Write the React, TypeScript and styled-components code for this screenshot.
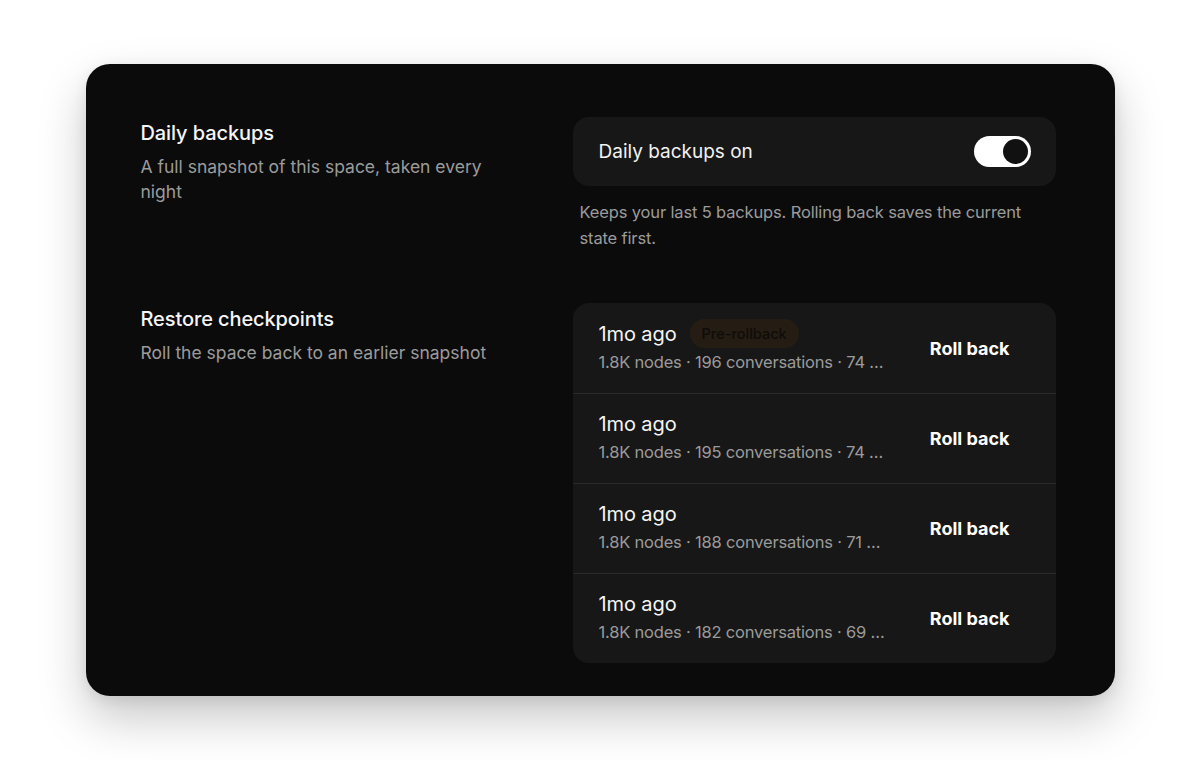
import React from "react";
import styled, { createGlobalStyle } from "styled-components";

const GlobalStyle = createGlobalStyle`
  html, body {
    margin: 0;
    padding: 0;
    background: #ffffff;
  }
  body {
    font-family: Inter, "Noto Sans", sans-serif;
    -webkit-font-smoothing: antialiased;
  }
`;

const Page = styled.div`
  width: 1200px;
  height: 760px;
  display: flex;
  justify-content: center;
  padding-top: 64px;
  box-sizing: border-box;
`;

const Card = styled.div`
  width: 1029px;
  height: 632px;
  box-sizing: border-box;
  background: #0b0b0b;
  border-radius: 24px;
  box-shadow: 0 22px 48px rgba(0, 0, 0, 0.22), 0 4px 14px rgba(0, 0, 0, 0.08);
  padding: 53px 59px 33px 55px;
  display: flex;
  flex-direction: column;
  gap: 52px;
`;

const Section = styled.section`
  display: grid;
  grid-template-columns: 360px 483px;
  column-gap: 72px;
  align-items: start;
`;

const Intro = styled.div`
  padding-top: 2px;
`;

const Title = styled.h2`
  margin: 0;
  font-size: 20px;
  line-height: 28px;
  font-weight: 500;
  color: #f5f5f5;
  letter-spacing: -0.1px;
`;

const Description = styled.p`
  margin: 7px 0 0;
  font-size: 17.5px;
  line-height: 25px;
  color: #9b9b9b;
`;

const Panel = styled.div`
  background: #171717;
  border-radius: 16px;
  overflow: hidden;
`;

const ToggleRow = styled.div`
  height: 69px;
  padding: 0 25px 0 26px;
  display: flex;
  align-items: center;
  justify-content: space-between;
`;

const ToggleLabel = styled.span`
  font-size: 19px;
  line-height: 26px;
  padding-top: 1px;
  color: #f2f2f2;
`;

const Switch = styled.button<{ $on: boolean }>`
  width: 57px;
  height: 31px;
  border: none;
  padding: 3px;
  border-radius: 999px;
  background: ${(p) => (p.$on ? "#ffffff" : "#3a3a3a")};
  display: flex;
  justify-content: ${(p) => (p.$on ? "flex-end" : "flex-start")};
  cursor: pointer;
`;

const Knob = styled.span`
  width: 25px;
  height: 25px;
  border-radius: 50%;
  background: #111111;
`;

const Hint = styled.p`
  margin: 13px 0 0;
  padding-left: 7px;
  font-size: 16.5px;
  line-height: 26px;
  letter-spacing: -0.15px;
  color: #9b9b9b;
`;

const CheckpointRow = styled.div`
  height: 90px;
  box-sizing: border-box;
  padding: 0 32px 0 26px;
  display: flex;
  align-items: center;
  gap: 24px;
  & + & {
    border-top: 1px solid #2a2a2a;
  }
`;

const RowText = styled.div`
  flex: 1;
  min-width: 0;
  display: flex;
  flex-direction: column;
  gap: 2px;
  padding-bottom: 3px;
`;

const RowHead = styled.div`
  display: flex;
  align-items: center;
  gap: 13px;
`;

const When = styled.span`
  font-size: 20px;
  line-height: 28px;
  color: #f5f5f5;
  letter-spacing: -0.1px;
`;

const Badge = styled.span`
  height: 29px;
  padding: 0 12px;
  display: inline-flex;
  align-items: center;
  border-radius: 999px;
  background: #251d13;
  color: #0e0c09;
  font-size: 14.5px;
  font-weight: 500;
`;

const Meta = styled.span`
  font-size: 16.5px;
  line-height: 24px;
  letter-spacing: -0.2px;
  color: #9b9b9b;
  white-space: nowrap;
`;

const RollButton = styled.button`
  border: none;
  background: transparent;
  padding: 8px 14px;
  font-family: inherit;
  font-size: 18px;
  font-weight: 700;
  color: #ffffff;
  cursor: pointer;
`;

type Checkpoint = { when: string; meta: string; tag?: string };

const checkpoints: Checkpoint[] = [
  { when: "1mo ago", meta: "1.8K nodes · 196 conversations · 74 …", tag: "Pre-rollback" },
  { when: "1mo ago", meta: "1.8K nodes · 195 conversations · 74 …" },
  { when: "1mo ago", meta: "1.8K nodes · 188 conversations · 71 …" },
  { when: "1mo ago", meta: "1.8K nodes · 182 conversations · 69 …" },
];

export default function App() {
  return (
    <>
      <GlobalStyle />
      <Page>
        <Card>
          <Section>
            <Intro>
              <Title>Daily backups</Title>
              <Description>A full snapshot of this space, taken every night</Description>
            </Intro>
            <div>
              <Panel>
                <ToggleRow>
                  <ToggleLabel>Daily backups on</ToggleLabel>
                  <Switch $on aria-label="Daily backups">
                    <Knob />
                  </Switch>
                </ToggleRow>
              </Panel>
              <Hint>Keeps your last 5 backups. Rolling back saves the current state first.</Hint>
            </div>
          </Section>
          <Section>
            <Intro>
              <Title>Restore checkpoints</Title>
              <Description>Roll the space back to an earlier snapshot</Description>
            </Intro>
            <Panel>
              {checkpoints.map((c, i) => (
                <CheckpointRow key={i}>
                  <RowText>
                    <RowHead>
                      <When>{c.when}</When>
                      {c.tag && <Badge>{c.tag}</Badge>}
                    </RowHead>
                    <Meta>{c.meta}</Meta>
                  </RowText>
                  <RollButton>Roll back</RollButton>
                </CheckpointRow>
              ))}
            </Panel>
          </Section>
        </Card>
      </Page>
    </>
  );
}
